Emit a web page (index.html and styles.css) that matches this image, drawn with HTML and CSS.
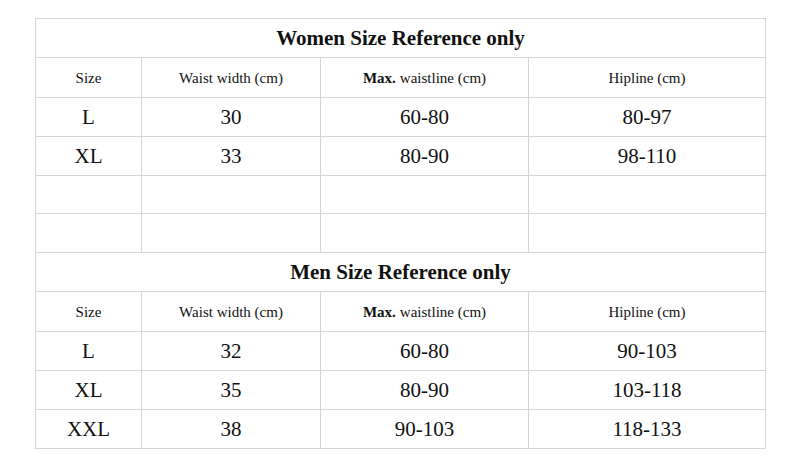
FILE: index.html
```html
<!DOCTYPE html>
<html>
<head>
<meta charset="utf-8">
<link rel="stylesheet" href="styles.css">
</head>
<body>
<div class="size-table">
  <div class="cell title">Women Size Reference only</div>
  <div class="cell head">Size</div>
  <div class="cell head">Waist width (cm)</div>
  <div class="cell head"><b>Max.</b> waistline (cm)</div>
  <div class="cell head">Hipline (cm)</div>
  <div class="cell data">L</div>
  <div class="cell data">30</div>
  <div class="cell data">60-80</div>
  <div class="cell data">80-97</div>
  <div class="cell data">XL</div>
  <div class="cell data">33</div>
  <div class="cell data">80-90</div>
  <div class="cell data">98-110</div>
  <div class="cell data"></div>
  <div class="cell data"></div>
  <div class="cell data"></div>
  <div class="cell data"></div>
  <div class="cell data"></div>
  <div class="cell data"></div>
  <div class="cell data"></div>
  <div class="cell data"></div>
  <div class="cell title">Men Size Reference only</div>
  <div class="cell head">Size</div>
  <div class="cell head">Waist width (cm)</div>
  <div class="cell head"><b>Max.</b> waistline (cm)</div>
  <div class="cell head">Hipline (cm)</div>
  <div class="cell data">L</div>
  <div class="cell data">32</div>
  <div class="cell data">60-80</div>
  <div class="cell data">90-103</div>
  <div class="cell data">XL</div>
  <div class="cell data">35</div>
  <div class="cell data">80-90</div>
  <div class="cell data">103-118</div>
  <div class="cell data">XXL</div>
  <div class="cell data">38</div>
  <div class="cell data">90-103</div>
  <div class="cell data">118-133</div>
</div>
</body>
</html>
```
FILE: styles.css
```css
html, body {
  margin: 0;
  padding: 0;
  background: #ffffff;
}
body {
  padding: 18px 0 0 35px;
  font-family: "Liberation Serif", "Times New Roman", serif;
  color: #111;
}
.size-table {
  display: grid;
  width: 729px;
  grid-template-columns: 105px 178px 207px 236px;
  grid-template-rows: 38px 39px 38px 38px 37px 38px 38px 39px 38px 38px 38px;
  gap: 1px;
  padding: 1px;
  background: #d5d5de;
}
.cell {
  background: #fff;
  display: flex;
  align-items: center;
  justify-content: center;
  white-space: nowrap;
}
.title {
  grid-column: 1 / span 4;
  font-size: 21px;
  font-weight: bold;
}
.head {
  font-size: 15px;
  padding-top: 2px;
}
.head b {
  margin-right: 4px;
}
.data {
  font-size: 21px;
}
```
